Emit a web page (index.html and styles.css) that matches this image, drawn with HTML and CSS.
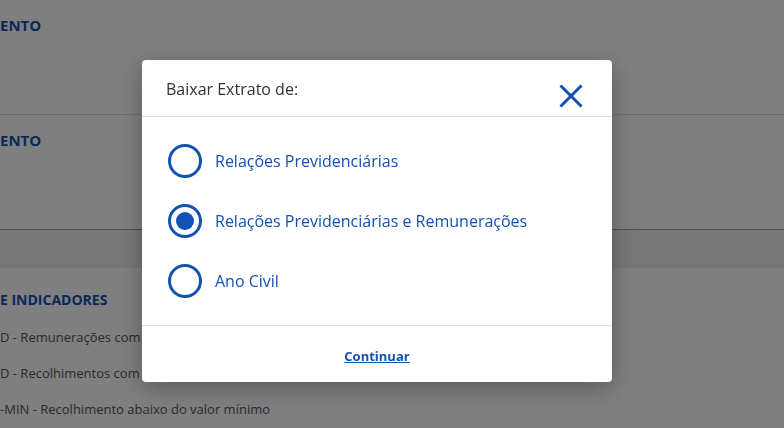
FILE: index.html
```html
<!DOCTYPE HTML>
<html lang="pt-BR">
<head>
  <meta charset="UTF-8">
  <meta name="viewport" content="width=device-width, initial-scale=1.0">
  <title>Extrato Previdenciário</title>
  <link rel="stylesheet" href="styles.css">
</head>
<body>
  <div class="page">
    <!-- Sections behind the dialog -->
    <div class="section">
      <h3 class="section-title">ENTO</h3>
    </div>
    <div class="section section-last">
      <h3 class="section-title">ENTO</h3>
    </div>
    <div class="band"></div>
    <div class="legend">
      <h3 class="legend-title">E INDICADORES</h3>
      <ul class="legend-list">
        <li>D - Remunerações com indicadores/pendências</li>
        <li>D - Recolhimentos com indicadores/pendências</li>
        <li>-MIN - Recolhimento abaixo do valor mínimo</li>
      </ul>
    </div>
  </div>

  <!-- Download dialog -->
  <div class="overlay">
    <div class="modal" role="dialog">
      <div class="modal-header">
        <span class="modal-title">Baixar Extrato de:</span>
        <button class="close-button" aria-label="Fechar">
          <svg width="24" height="24" viewBox="0 0 24 24">
            <path d="M1.5 1.5 L22.5 22.5 M22.5 1.5 L1.5 22.5" stroke="#1351b4" stroke-width="3" fill="none"/>
          </svg>
        </button>
      </div>
      <div class="modal-body">
        <label class="radio-item">
          <span class="radio"></span>
          <span class="radio-label">Relações Previdenciárias</span>
        </label>
        <label class="radio-item">
          <span class="radio checked"></span>
          <span class="radio-label">Relações Previdenciárias e Remunerações</span>
        </label>
        <label class="radio-item">
          <span class="radio"></span>
          <span class="radio-label">Ano Civil</span>
        </label>
      </div>
      <div class="modal-footer">
        <a href="#" class="continue-link">Continuar</a>
      </div>
    </div>
  </div>
</body>
</html>
```

FILE: styles.css
```css
body {
  margin: 0;
  font-family: 'Open Sans', 'Noto Sans', sans-serif;
  background: #fff;
  color: #333;
}

.page {
  width: 784px;
  overflow: hidden;
}

.section {
  height: 114px;
  border-bottom: 1px solid #dcdcdc;
}
.section-last {
  border-bottom-color: #9a9a9a;
}
.section-title {
  margin: 0;
  padding-top: 15px;
  font-size: 15px;
  line-height: 20px;
  font-weight: 700;
  color: #1351b4;
}

.band {
  height: 38px;
  background: #efefef;
}

.legend-title {
  margin: 0;
  padding-top: 22px;
  font-size: 14px;
  line-height: 20px;
  font-weight: 700;
  color: #1351b4;
}
.legend-list {
  list-style: none;
  margin: 9px 0 0;
  padding: 0;
  font-size: 13px;
  line-height: 36px;
  color: #555;
  white-space: nowrap;
}

/* Dialog */
.overlay {
  position: fixed;
  top: 0;
  left: 0;
  right: 0;
  bottom: 0;
  background: rgba(0, 0, 0, 0.5);
  display: flex;
  justify-content: center;
  align-items: flex-start;
  padding: 60px 30px 0 0;
}
.modal {
  width: 470px;
  background: #fff;
  border-radius: 4px;
  box-shadow: 0 6px 24px rgba(0, 0, 0, 0.3);
}
.modal-header {
  display: flex;
  justify-content: space-between;
  align-items: flex-start;
  padding: 19px 29px 8px 24px;
  border-bottom: 1px solid #dedede;
}
.modal-title {
  font-size: 16px;
  line-height: 21px;
  color: #333;
}
.close-button {
  background: none;
  border: none;
  padding: 0;
  margin-top: 5px;
  width: 24px;
  height: 24px;
  cursor: pointer;
}
.close-button svg {
  display: block;
}

.modal-body {
  display: flex;
  flex-direction: column;
  gap: 26px;
  padding: 27px 26px 27px;
}
.radio-item {
  display: flex;
  align-items: center;
  gap: 13px;
  cursor: pointer;
}
.radio {
  width: 34px;
  height: 34px;
  box-sizing: border-box;
  border: 3px solid #1351b4;
  border-radius: 50%;
  display: flex;
  align-items: center;
  justify-content: center;
}
.radio.checked::after {
  content: "";
  width: 18px;
  height: 18px;
  border-radius: 50%;
  background: #1351b4;
}
.radio-label {
  font-size: 16px;
  color: #1351b4;
}

.modal-footer {
  border-top: 1px solid #dedede;
  height: 56px;
  display: flex;
  align-items: center;
  justify-content: center;
}
.continue-link {
  font-size: 13px;
  font-weight: 700;
  color: #1351b4;
  text-decoration: underline;
  margin-top: 4px;
}
```
